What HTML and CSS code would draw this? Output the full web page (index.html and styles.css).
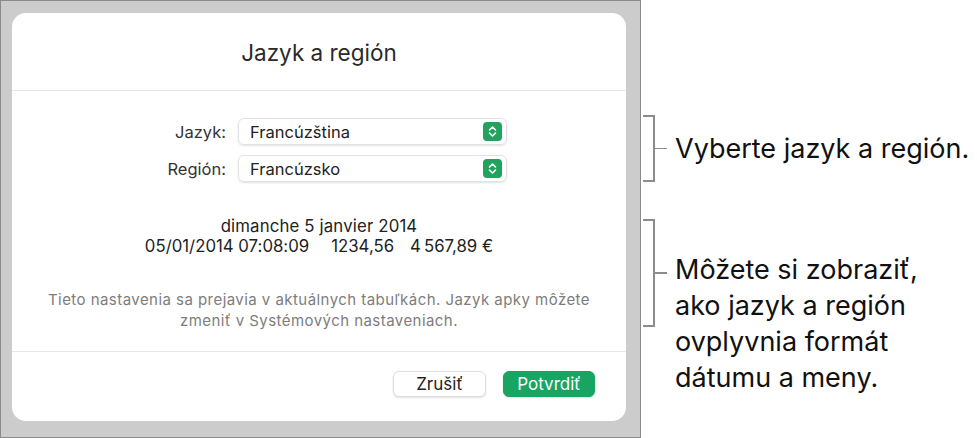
FILE: index.html
```html
<!DOCTYPE html>
<html>
<head>
  <meta charset="utf-8">
  <title>Jazyk a región</title>
  <link rel="stylesheet" href="styles.css">
</head>
<body>
<div class="page">
  <div class="backdrop">
    <div class="dialog">
      <div class="dialog-head">Jazyk a región</div>
      <div class="dialog-body">
        <div class="form">
          <label class="lbl">Jazyk:</label>
          <div class="popup"><span>Francúzština</span>
            <span class="stepper"><svg width="11" height="13" viewBox="0 0 11 13"><path d="M2.5 5 L5.5 2 L8.5 5 M2.5 8 L5.5 11 L8.5 8" fill="none" stroke="#fff" stroke-width="1.6" stroke-linecap="round" stroke-linejoin="round"/></svg></span>
          </div>
          <label class="lbl">Región:</label>
          <div class="popup"><span>Francúzsko</span>
            <span class="stepper"><svg width="11" height="13" viewBox="0 0 11 13"><path d="M2.5 5 L5.5 2 L8.5 5 M2.5 8 L5.5 11 L8.5 8" fill="none" stroke="#fff" stroke-width="1.6" stroke-linecap="round" stroke-linejoin="round"/></svg></span>
          </div>
        </div>
        <div class="sample">
          <div>dimanche 5 janvier 2014</div>
          <div>05/01/2014 07:08:09<span class="gap wide"></span>1234,56<span class="gap"></span>4&#8239;567,89&nbsp;€</div>
        </div>
        <p class="note">Tieto nastavenia sa prejavia v aktuálnych tabuľkách. Jazyk apky môžete<br>zmeniť v Systémových nastaveniach.</p>
      </div>
      <div class="dialog-foot">
        <button class="btn">Zrušiť</button>
        <button class="btn primary">Potvrdiť</button>
      </div>
    </div>
  </div>

  <div class="callouts">
    <div class="callout one">
      <div class="bracket small"></div>
      <div class="ctext">Vyberte jazyk a región.</div>
    </div>
    <div class="callout two">
      <div class="bracket big"></div>
      <div class="ctext">Môžete si zobraziť,<br>ako jazyk a región<br>ovplyvnia formát<br>dátumu a meny.</div>
    </div>
  </div>
</div>
</body>
</html>
```

FILE: styles.css
```css
html, body {
  margin: 0;
  background: #fff;
  font-family: Inter, "Liberation Sans", sans-serif;
  color: #222;
}
.page {
  display: flex;
  width: 977px;
  height: 438px;
}
.backdrop {
  box-sizing: border-box;
  width: 641px;
  height: 438px;
  background: #cccccc;
  border: 1px solid #8a8a8a;
  padding: 12px 0 0 11px;
}
.dialog {
  width: 614px;
  height: 408px;
  background: #fff;
  border-radius: 14px;
  display: flex;
  flex-direction: column;
}
.dialog-head {
  height: 76px;
  border-bottom: 1px solid #e6e6e6;
  display: flex;
  align-items: center;
  justify-content: center;
  font-size: 22.5px;
  color: #2a2a2a;
  padding-top: 1px;
}
.dialog-body {
  flex: 1;
  border-bottom: 1px solid #e6e6e6;
  display: flex;
  flex-direction: column;
  align-items: center;
}
.form {
  margin-top: 27px;
  display: grid;
  grid-template-columns: 214px 269px;
  column-gap: 12px;
  row-gap: 10px;
  align-items: center;
  align-self: flex-start;
}
.lbl {
  text-align: right;
  font-size: 16.5px;
  color: #333;
}
.popup {
  box-sizing: border-box;
  height: 27px;
  border-radius: 6px;
  border: 1px solid #e2e2e2;
  box-shadow: 0 1px 2px rgba(0,0,0,0.12);
  display: flex;
  align-items: center;
  justify-content: space-between;
  padding: 0 4px 0 11px;
  font-size: 16.5px;
  color: #222;
}
.stepper {
  width: 19px;
  height: 19px;
  border-radius: 4px;
  background: #1fa35e;
  display: flex;
  align-items: center;
  justify-content: center;
}
.sample {
  margin-top: 34px;
  text-align: center;
  font-size: 16.8px;
  letter-spacing: 0.15px;
  line-height: 20px;
  color: #222;
}
.gap {
  display: inline-block;
  width: 16px;
}
.gap.wide {
  width: 22px;
}
.note {
  margin: 33px 0 0;
  text-align: center;
  font-size: 15px;
  letter-spacing: 0.45px;
  line-height: 21px;
  color: #7d7d7d;
}
.dialog-foot {
  height: 69px;
  display: flex;
  justify-content: flex-end;
  align-items: flex-start;
  padding: 19px 31px 0 0;
  box-sizing: border-box;
  gap: 17px;
}
.btn {
  box-sizing: border-box;
  height: 26px;
  width: 93px;
  border-radius: 6px;
  border: 1px solid #dedede;
  background: #fff;
  box-shadow: 0 1px 2px rgba(0,0,0,0.12);
  font-family: Inter, "Liberation Sans", sans-serif;
  font-size: 17px;
  color: #222;
  padding: 0;
}
.btn.primary {
  width: 92px;
  background: #17a561;
  border-color: #17a561;
  color: #fff;
}
.callouts {
  padding-left: 2px;
}
.callout {
  display: flex;
  align-items: center;
}
.callout.one {
  margin-top: 115px;
}
.callout.two {
  margin-top: 37px;
  align-items: flex-start;
}
.bracket {
  box-sizing: border-box;
  width: 12px;
  border: 2px solid #8c8c8c;
  border-left: none;
  position: relative;
  flex: none;
}
.bracket::after {
  content: "";
  position: absolute;
  left: 10px;
  top: 50%;
  width: 14px;
  height: 1.5px;
  margin-top: -1px;
  background: #8c8c8c;
}
.bracket.small {
  height: 67px;
}
.bracket.big {
  height: 108px;
}
.ctext {
  margin-left: 20px;
  font-size: 27px;
  line-height: 36px;
  color: #111;
}
.callout.two .ctext {
  margin-top: 33px;
}
```
